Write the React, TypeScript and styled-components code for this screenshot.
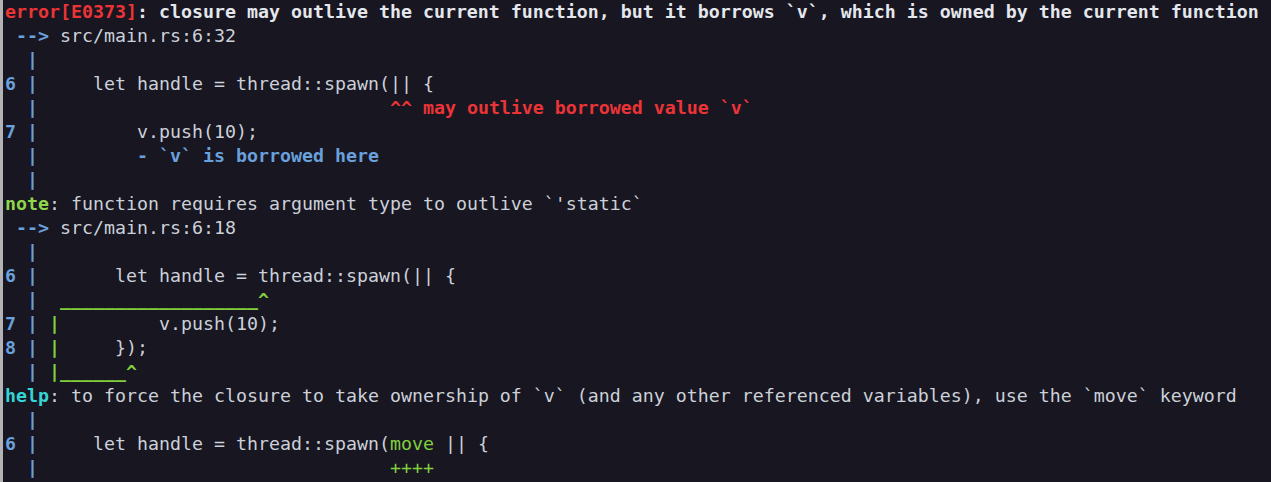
import React from "react";
import styled, { createGlobalStyle } from "styled-components";

const Global = createGlobalStyle`
  html, body {
    margin: 0;
    padding: 0;
    background: #171621;
    overflow: hidden;
  }
`;

type Tone = "text" | "bright" | "red" | "blue" | "green" | "cyan" | "lime";

const colors: Record<Tone, string> = {
  text: "#ccd0d8",
  bright: "#e4e7ec",
  red: "#ec3437",
  blue: "#6aa0dc",
  green: "#8ed54a",
  cyan: "#35d4d6",
  lime: "#82cf3e",
};

const Terminal = styled.div`
  position: relative;
  width: 1271px;
  height: 482px;
  box-sizing: border-box;
  background: #171621;
  border-left: 3px solid #b3b3b6;
  padding-left: 2px;
  font-family: "DejaVu Sans Mono", "Liberation Mono", monospace;
  font-size: 18.27px;
  color: ${colors.text};
  display: flex;
  flex-direction: column;
  overflow: hidden;
`;

const ScrollMark = styled.div`
  position: absolute;
  left: -3px;
  top: 37px;
  width: 3px;
  height: 2px;
  background: #d23a3f;
`;

const Line = styled.div`
  height: 24px;
  line-height: 24px;
  white-space: pre;
  flex: none;
`;

const Seg = styled.span<{ $tone?: Tone; $bold?: boolean }>`
  color: ${(p) => colors[p.$tone ?? "text"]};
  font-weight: ${(p) => (p.$bold ? 700 : 400)};
`;

const Gutter = ({ n = " " }: { n?: string }) => (
  <Seg $tone="blue" $bold>{`${n} |`}</Seg>
);

export default function App() {
  return (
    <>
      <Global />
      <Terminal>
        <ScrollMark />
        <Line>
          <Seg $tone="red" $bold>error[E0373]</Seg>
          <Seg $tone="bright" $bold>
            : closure may outlive the current function, but it borrows `v`, which is owned by the current function
          </Seg>
        </Line>
        <Line>
          <Seg $tone="blue" $bold>{" -->"}</Seg>
          <Seg> src/main.rs:6:32</Seg>
        </Line>
        <Line>
          <Gutter />
        </Line>
        <Line>
          <Gutter n="6" />
          <Seg>{"     let handle = thread::spawn(|| {"}</Seg>
        </Line>
        <Line>
          <Gutter />
          <Seg>{"                                "}</Seg>
          <Seg $tone="red" $bold>^^ may outlive borrowed value `v`</Seg>
        </Line>
        <Line>
          <Gutter n="7" />
          <Seg>{"         v.push(10);"}</Seg>
        </Line>
        <Line>
          <Gutter />
          <Seg $tone="blue" $bold>{"         - `v` is borrowed here"}</Seg>
        </Line>
        <Line>
          <Gutter />
        </Line>
        <Line>
          <Seg $tone="green" $bold>note</Seg>
          <Seg>: function requires argument type to outlive `'static`</Seg>
        </Line>
        <Line>
          <Seg $tone="blue" $bold>{" -->"}</Seg>
          <Seg> src/main.rs:6:18</Seg>
        </Line>
        <Line>
          <Gutter />
        </Line>
        <Line>
          <Gutter n="6" />
          <Seg>{"       let handle = thread::spawn(|| {"}</Seg>
        </Line>
        <Line>
          <Gutter />
          <Seg $tone="lime" $bold>{"  __________________^"}</Seg>
        </Line>
        <Line>
          <Gutter n="7" />
          <Seg $tone="lime" $bold>{" |"}</Seg>
          <Seg>{"         v.push(10);"}</Seg>
        </Line>
        <Line>
          <Gutter n="8" />
          <Seg $tone="lime" $bold>{" |"}</Seg>
          <Seg>{"     });"}</Seg>
        </Line>
        <Line>
          <Gutter />
          <Seg $tone="lime" $bold>{" |______^"}</Seg>
        </Line>
        <Line>
          <Seg $tone="cyan" $bold>help</Seg>
          <Seg>
            : to force the closure to take ownership of `v` (and any other referenced variables), use the `move` keyword
          </Seg>
        </Line>
        <Line>
          <Gutter />
        </Line>
        <Line>
          <Gutter n="6" />
          <Seg>{"     let handle = thread::spawn("}</Seg>
          <Seg $tone="lime">move</Seg>
          <Seg>{" || {"}</Seg>
        </Line>
        <Line>
          <Gutter />
          <Seg>{"                                "}</Seg>
          <Seg $tone="lime">++++</Seg>
        </Line>
      </Terminal>
    </>
  );
}
